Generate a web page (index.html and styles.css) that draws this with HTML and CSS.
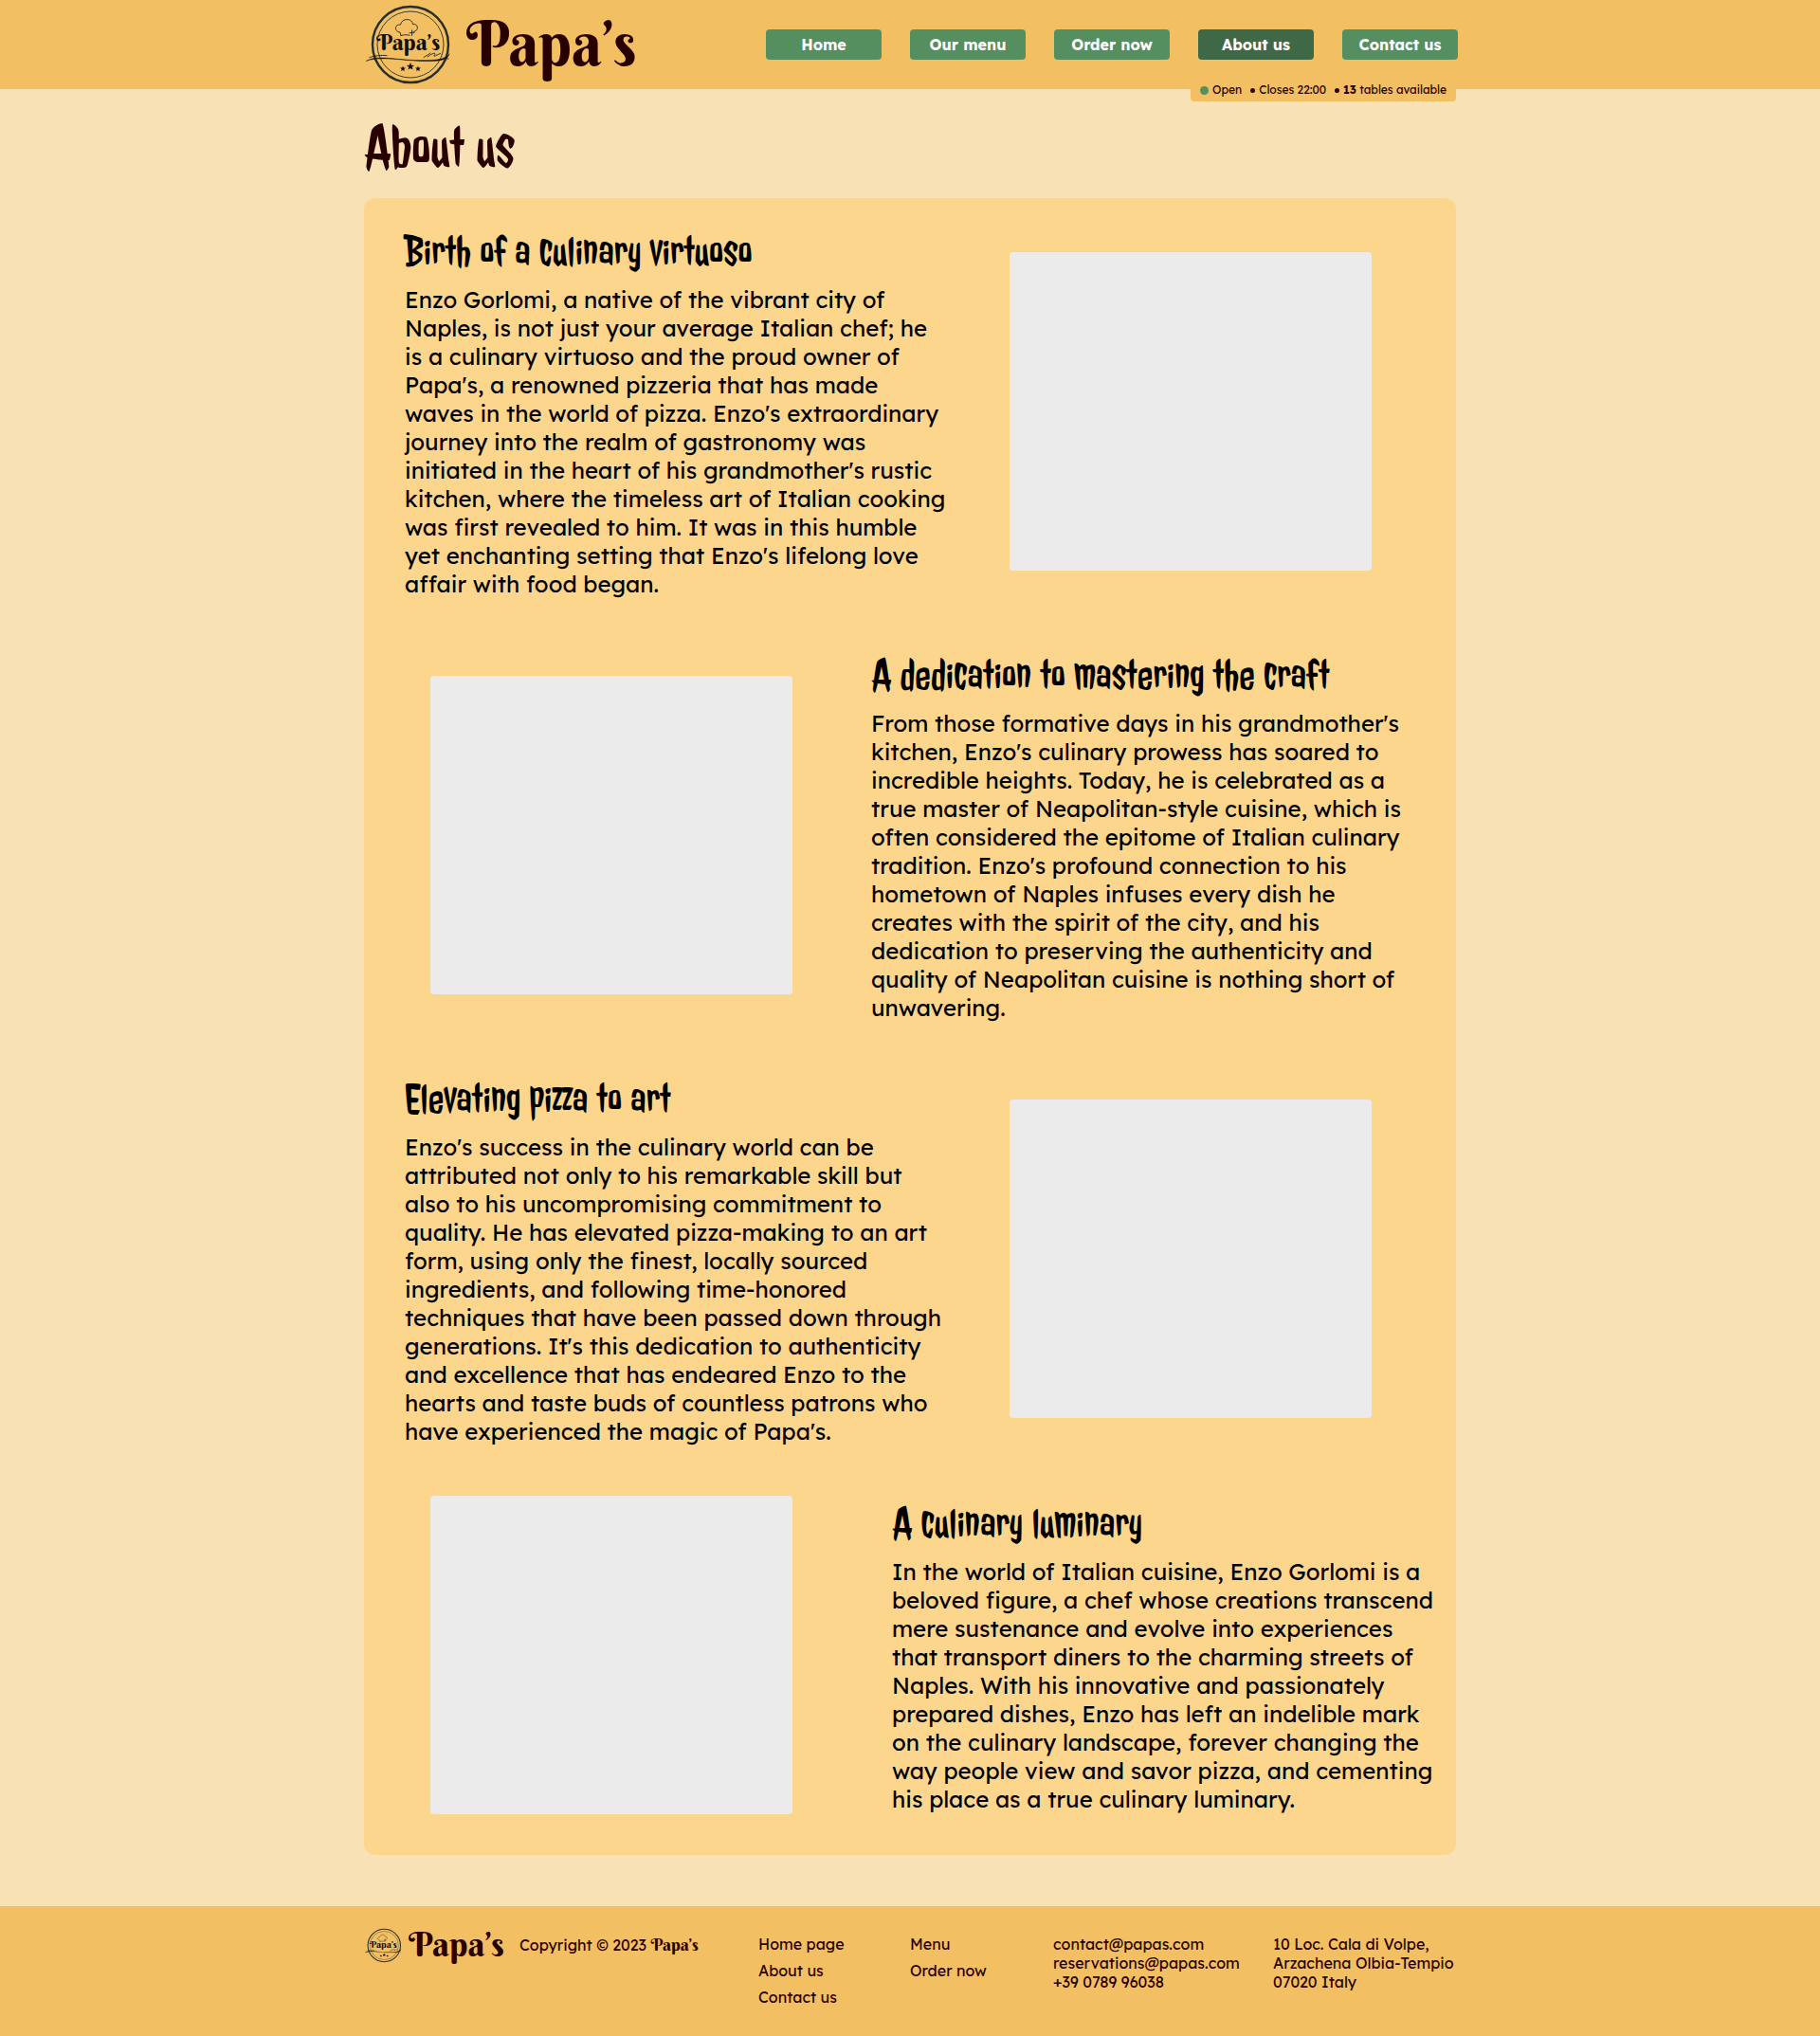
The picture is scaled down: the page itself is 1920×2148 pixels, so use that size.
FILE: index.html
```html
<!DOCTYPE html>
<html lang="en">
<head>
<meta charset="utf-8">
<meta name="viewport" content="width=device-width, initial-scale=1">
<title>About us – Papa’s</title>
<link rel="stylesheet" href="styles.css">
</head>
<body>
<header class="site-header">
  <div class="container header-bar">
    <a class="brand" href="#">
      <svg class="brand-emblem" viewBox="4 4 92 86" aria-hidden="true">
        <circle cx="53" cy="47" r="40" fill="none" stroke="#272f2e" stroke-width="2.4"/>
        <circle cx="53" cy="47" r="35" fill="none" stroke="#272f2e" stroke-width="0.9"/>
        <path d="M43 37.500L42 34C36 33.500 35.500 25.500 42.500 26C44 18.500 55 19 55.500 25.500C62 25 62 33 56 33.500M43 37.500C46 36.500 49 36.500 52 37.200M54.500 32V37.500M52 34.700H57" fill="none" stroke="#111" stroke-width="0.8" stroke-linecap="round"/>
        <text class="emblem-text" x="17" y="53">Papa’s</text>
        <path d="M6 64.500C12 60.500 22 60.500 32 61.500C48 63 64 64.500 80 63C88 62 93 60 94 56.500C93.500 60.500 90 63.500 80 64.300C60 65.500 44 62.500 30 62C20 61.700 12 62 6 64.500Z" fill="#111" stroke="#111" stroke-width="0.4"/>
        <path d="M10 60.500C17 58.500 22 58.200 28 58.500M71 60C75 57 78 55.500 79 56.500C79.500 57.500 77 59 78 59.200C80 59.300 82 57 84.500 56.500M67 60.500C70 58.500 73 57 74 56M88 61L93 62" fill="none" stroke="#111" stroke-width="0.8" stroke-linecap="round"/>
        <path d="M53 66L54.100 68.700L57 68.900L54.800 70.700L55.500 73.500L53 72L50.500 73.500L51.200 70.700L49 68.900L51.900 68.700ZM45 69.400L45.800 71.400L48 71.600L46.300 73L46.900 75L45 73.900L43.100 75L43.700 73L42 71.600L44.200 71.400ZM61 69.400L61.800 71.400L64 71.600L62.300 73L62.900 75L61 73.900L59.100 75L59.700 73L58 71.600L60.200 71.400Z" fill="#111"/>
      </svg>
      <span class="brand-name">Papa’s</span>
    </a>
    <nav class="main-nav" aria-label="Main">
      <a class="nav-link" href="#">Home</a>
      <a class="nav-link" href="#">Our menu</a>
      <a class="nav-link" href="#">Order now</a>
      <a class="nav-link nav-link-active" href="#" aria-current="page">About us</a>
      <a class="nav-link" href="#">Contact us</a>
    </nav>
    <div class="status">
      <span class="status-item status-open">Open</span>
      <span class="status-item status-next">Closes 22:00</span>
      <span class="status-item status-next"><span><strong>13</strong> tables available</span></span>
    </div>
  </div>
</header>

<main class="container">
  <h1 class="page-title">About us</h1>
  <div class="card">
    <section class="story">
      <div class="story-text">
        <h2 class="story-title">Birth of a culinary virtuoso</h2>
        <p class="story-body">Enzo Gorlomi, a native of the vibrant city of Naples, is not just your average Italian chef; he is a culinary virtuoso and the proud owner of Papa's, a renowned pizzeria that has made waves in the world of pizza. Enzo's extraordinary journey into the realm of gastronomy was initiated in the heart of his grandmother's rustic kitchen, where the timeless art of Italian cooking was first revealed to him. It was in this humble yet enchanting setting that Enzo's lifelong love affair with food began.</p>
      </div>
      <div class="story-image"></div>
    </section>
    <section class="story story-reverse">
      <div class="story-image"></div>
      <div class="story-text">
        <h2 class="story-title">A dedication to mastering the craft</h2>
        <p class="story-body">From those formative days in his grandmother's kitchen, Enzo's culinary prowess has soared to incredible heights. Today, he is celebrated as a true master of Neapolitan-style cuisine, which is often considered the epitome of Italian culinary tradition. Enzo's profound connection to his hometown of Naples infuses every dish he creates with the spirit of the city, and his dedication to preserving the authenticity and quality of Neapolitan cuisine is nothing short of unwavering.</p>
      </div>
    </section>
    <section class="story">
      <div class="story-text">
        <h2 class="story-title">Elevating pizza to art</h2>
        <p class="story-body">Enzo's success in the culinary world can be attributed not only to his remarkable skill but also to his uncompromising commitment to quality. He has elevated pizza-making to an art form, using only the finest, locally sourced ingredients, and following time-honored techniques that have been passed down through generations. It's this dedication to authenticity and excellence that has endeared Enzo to the hearts and taste buds of countless patrons who have experienced the magic of Papa's.</p>
      </div>
      <div class="story-image"></div>
    </section>
    <section class="story story-reverse story-last">
      <div class="story-image"></div>
      <div class="story-text">
        <h2 class="story-title">A culinary luminary</h2>
        <p class="story-body">In the world of Italian cuisine, Enzo Gorlomi is a beloved figure, a chef whose creations transcend mere sustenance and evolve into experiences that transport diners to the charming streets of Naples. With his innovative and passionately prepared dishes, Enzo has left an indelible mark on the culinary landscape, forever changing the way people view and savor pizza, and cementing his place as a true culinary luminary.</p>
      </div>
    </section>
  </div>
</main>

<footer class="site-footer">
  <div class="container footer-grid">
    <div class="footer-brand">
      <a class="brand brand-small" href="#">
        <svg class="brand-emblem" viewBox="4 4 92 86" aria-hidden="true">
          <circle cx="53" cy="47" r="40" fill="none" stroke="#272f2e" stroke-width="2.4"/>
          <circle cx="53" cy="47" r="35" fill="none" stroke="#272f2e" stroke-width="0.9"/>
          <path d="M43 37.500L42 34C36 33.500 35.500 25.500 42.500 26C44 18.500 55 19 55.500 25.500C62 25 62 33 56 33.500M43 37.500C46 36.500 49 36.500 52 37.200M54.500 32V37.500M52 34.700H57" fill="none" stroke="#111" stroke-width="0.8" stroke-linecap="round"/>
          <text class="emblem-text" x="17" y="53">Papa’s</text>
          <path d="M6 64.500C12 60.500 22 60.500 32 61.500C48 63 64 64.500 80 63C88 62 93 60 94 56.500C93.500 60.500 90 63.500 80 64.300C60 65.500 44 62.500 30 62C20 61.700 12 62 6 64.500Z" fill="#111" stroke="#111" stroke-width="0.4"/>
          <path d="M10 60.500C17 58.500 22 58.200 28 58.500M71 60C75 57 78 55.500 79 56.500C79.500 57.500 77 59 78 59.200C80 59.300 82 57 84.500 56.500M67 60.500C70 58.500 73 57 74 56M88 61L93 62" fill="none" stroke="#111" stroke-width="0.8" stroke-linecap="round"/>
          <path d="M53 66L54.100 68.700L57 68.900L54.800 70.700L55.500 73.500L53 72L50.500 73.500L51.200 70.700L49 68.900L51.900 68.700ZM45 69.400L45.800 71.400L48 71.600L46.300 73L46.900 75L45 73.900L43.100 75L43.700 73L42 71.600L44.200 71.400ZM61 69.400L61.800 71.400L64 71.600L62.300 73L62.900 75L61 73.900L59.100 75L59.700 73L58 71.600L60.200 71.400Z" fill="#111"/>
        </svg>
        <span class="brand-name">Papa’s</span>
      </a>
      <p class="copyright">Copyright © 2023 <span class="copyright-name">Papa’s</span></p>
    </div>
    <ul class="footer-links">
      <li><a href="#">Home page</a></li>
      <li><a href="#">About us</a></li>
      <li><a href="#">Contact us</a></li>
    </ul>
    <ul class="footer-links">
      <li><a href="#">Menu</a></li>
      <li><a href="#">Order now</a></li>
    </ul>
    <address class="footer-address">contact@papas.com<br>reservations@papas.com<br>+39 0789 96038</address>
    <address class="footer-address">10 Loc. Cala di Volpe,<br>Arzachena Olbia-Tempio<br>07020 Italy</address>
  </div>
</footer>
</body>
</html>
```
FILE: styles.css
```css
:root {
  --bar: #f2bf63;
  --page: #f8e1b5;
  --card: #fdd68e;
  --green: #558e5f;
  --green-dark: #3f6847;
  --ink: #290000;
  --swash: "Berkshire Swash", "Liberation Serif", serif;
  --display: "Jolly Lodger", "Roboto Condensed", Roboto, sans-serif;
  --text: "Lexend Deca", Lexend, Inter, sans-serif;
}

* { box-sizing: border-box; }

body {
  margin: 0;
  background: var(--page);
  color: var(--ink);
  font-family: var(--text);
  font-size: 16px;
  line-height: 20px;
}

a { color: inherit; text-decoration: none; }

.container { width: 60%; min-width: 1152px; margin: 0 auto; }

/* Header */
.site-header { background: var(--bar); }
.header-bar {
  position: relative;
  display: flex;
  align-items: center;
  justify-content: space-between;
  height: 94px;
}
.brand { display: flex; align-items: center; gap: 16px; }
.brand-emblem { display: block; width: 92px; height: 86px; }
.brand-name { padding-bottom: 2px; font-family: var(--swash); font-size: 64px; line-height: 80px; }
.emblem-text { font-family: var(--swash); font-size: 24px; fill: #111; }

.main-nav { display: flex; gap: 30px; margin-right: -2px; }
.nav-link {
  width: 122px;
  padding: 6px 0;
  border-radius: 4px;
  background: var(--green);
  color: #fff;
  font-weight: 700;
  text-align: center;
}
.nav-link-active { background: var(--green-dark); }

.status {
  position: absolute;
  right: 0;
  bottom: -13px;
  display: flex;
  gap: 9px;
  padding: 7px 10px 5px;
  border-radius: 4px;
  background: var(--bar);
  font-size: 12px;
  line-height: 14px;
}
.status-item { display: flex; align-items: center; gap: 4px; }
.status-item::before { content: ""; border-radius: 50%; }
.status-open::before { width: 9px; height: 9px; background: var(--green); }
.status-next::before { width: 5px; height: 5px; background: var(--ink); }

/* Story card */
.page-title {
  margin: 0;
  padding: 22px 0 13px;
  font: 400 64px/80px var(--display);
}
.card {
  display: flex;
  flex-direction: column;
  gap: 53px;
  padding: 28px 0 43px;
  border-radius: 12px;
  background: var(--card);
  color: #000;
}
.story {
  display: flex;
  align-items: center;
  justify-content: space-between;
  padding: 0 89px 0 43px;
}
.story-reverse { justify-content: flex-start; gap: 83px; padding: 0 20px 0 70px; }
.story-last { gap: 105px; }
.story-text { max-width: 574px; }
.story-image {
  flex: none;
  width: 382px;
  height: 336px;
  border-radius: 4px;
  background: #ebebeb;
}
.story-title { margin: 0 0 8px; font: 400 48px/56px var(--display); }
.story-body { margin: 0; font-size: 24px; line-height: 30px; }

/* Footer */
.site-footer { margin-top: 54px; padding: 21px 0 31px; background: var(--bar); }
.footer-grid {
  display: grid;
  grid-template-columns: 416fr 160fr 151fr 232fr 193fr;
  align-items: start;
}
.footer-brand { display: flex; align-items: center; gap: 16px; }
.brand-small { gap: 7px; }
.brand-small .brand-emblem { width: 40px; height: 37px; }
.brand-small .brand-name { font-size: 36px; line-height: 38px; }
.copyright { margin: 0; }
.copyright-name { font-family: var(--swash); font-size: 18px; }
.footer-links {
  display: grid;
  gap: 8px;
  margin: 9px 0 0;
  padding: 0;
  list-style: none;
}
.footer-address { margin-top: 9px; font-style: normal; }
```
